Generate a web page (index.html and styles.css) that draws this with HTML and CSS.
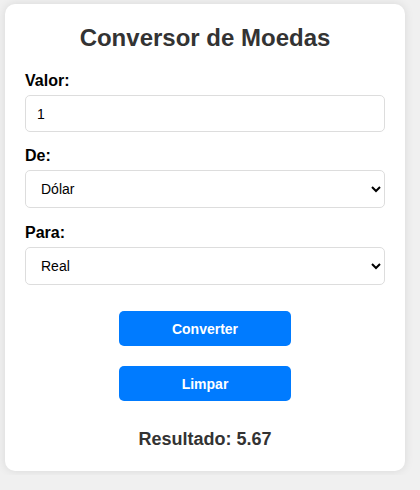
FILE: index.html
```html
<!DOCTYPE html>
<html lang="pt-BR">
<head>
<meta charset="UTF-8">
<title>Conversor de Moedas</title>
<link rel="stylesheet" href="styles.css">
</head>
<body>
<div class="container">
  <h2 class="title">Conversor de Moedas</h2>
  <label class="label" for="valor">Valor:</label>
  <input class="field input" id="valor" type="number" value="1">
  <label class="label" for="de">De:</label>
  <select class="field select" id="de">
    <option>Dólar</option>
    <option>Euro</option>
    <option>Real</option>
  </select>
  <label class="label" for="para">Para:</label>
  <select class="field select" id="para">
    <option>Real</option>
    <option>Dólar</option>
    <option>Euro</option>
  </select>
  <button class="btn" type="button">Converter</button>
  <button class="btn" type="button">Limpar</button>
  <p class="result">Resultado: 5.67</p>
</div>
</body>
</html>
```
FILE: styles.css
```css
html, body {
  margin: 0;
  padding: 0;
}
body {
  background: #f0f0f0;
  font-family: "Liberation Sans", Arial, sans-serif;
  padding: 4px 5px;
}
.container {
  width: 400px;
  box-sizing: border-box;
  background: #fff;
  border-radius: 10px;
  box-shadow: 0 0 10px rgba(0, 0, 0, 0.1);
  padding: 20px;
}
.title {
  margin: 0 0 20px;
  text-align: center;
  color: #333;
  font-size: 24px;
}
.label {
  display: block;
  font-weight: bold;
  font-size: 16px;
  color: #000;
  margin-bottom: 5px;
}
.field {
  display: block;
  width: 100%;
  box-sizing: border-box;
  padding: 0 11px;
  margin-bottom: 15px;
  border: 1px solid #ddd;
  border-radius: 5px;
  font-family: "Liberation Sans", Arial, sans-serif;
  font-size: 14px;
  background: #fff;
  color: #000;
}
.input {
  height: 37px;
}
.select {
  height: 38px;
  margin-bottom: 16px;
}
.btn {
  display: block;
  width: 172px;
  height: 35px;
  margin: 26px auto 0;
  border: none;
  border-radius: 5px;
  background: #007bff;
  color: #fff;
  font-family: "Liberation Sans", Arial, sans-serif;
  font-weight: bold;
  font-size: 14px;
}
.btn + .btn {
  margin-top: 20px;
}
.result {
  margin: 28px 0 1px;
  text-align: center;
  font-weight: bold;
  font-size: 18px;
  color: #333;
}
```
